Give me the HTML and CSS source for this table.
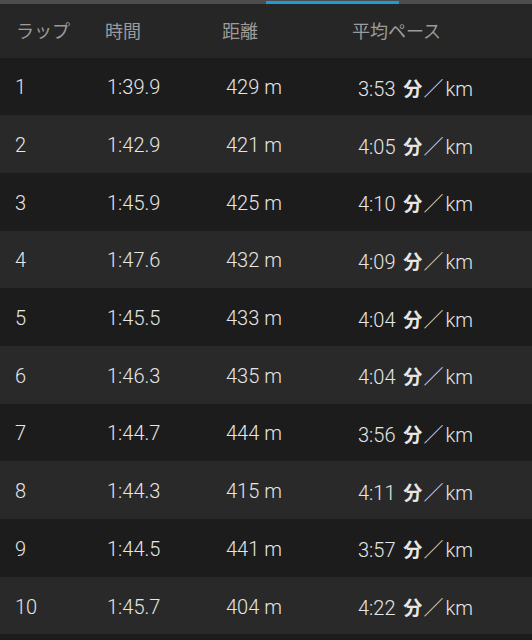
FILE: index.html
```html
<!DOCTYPE html>
<html lang="ja">
<head>
<meta charset="utf-8">
<link rel="stylesheet" href="styles.css">
</head>
<body>
<div class="tabbar"><div class="tab-indicator"></div></div>
<div class="header">
  <span>ラップ</span><span>時間</span><span>距離</span><span>平均ペース</span>
</div>
<div class="rows">
  <div class="row"><span>1</span><span>1:39.9</span><span>429 m</span><span>3:53 <b>分</b><i>／</i>km</span></div>
  <div class="row"><span>2</span><span>1:42.9</span><span>421 m</span><span>4:05 <b>分</b><i>／</i>km</span></div>
  <div class="row"><span>3</span><span>1:45.9</span><span>425 m</span><span>4:10 <b>分</b><i>／</i>km</span></div>
  <div class="row"><span>4</span><span>1:47.6</span><span>432 m</span><span>4:09 <b>分</b><i>／</i>km</span></div>
  <div class="row"><span>5</span><span>1:45.5</span><span>433 m</span><span>4:04 <b>分</b><i>／</i>km</span></div>
  <div class="row"><span>6</span><span>1:46.3</span><span>435 m</span><span>4:04 <b>分</b><i>／</i>km</span></div>
  <div class="row"><span>7</span><span>1:44.7</span><span>444 m</span><span>3:56 <b>分</b><i>／</i>km</span></div>
  <div class="row"><span>8</span><span>1:44.3</span><span>415 m</span><span>4:11 <b>分</b><i>／</i>km</span></div>
  <div class="row"><span>9</span><span>1:44.5</span><span>441 m</span><span>3:57 <b>分</b><i>／</i>km</span></div>
  <div class="row"><span>10</span><span>1:45.7</span><span>404 m</span><span>4:22 <b>分</b><i>／</i>km</span></div>
</div>
</body>
</html>
```
FILE: styles.css
```css
html, body {
  margin: 0;
  padding: 0;
  background: #1c1c1c;
  width: 532px;
  height: 640px;
  overflow: hidden;
}
body {
  font-family: Roboto, "Noto Sans CJK JP", sans-serif;
}
.tabbar {
  height: 4px;
  background: #4d4d4d;
  display: flex;
  align-items: flex-end;
  padding-left: 266px;
}
.tab-indicator {
  width: 133px;
  height: 3px;
  background: #1d9bd6;
}
.header {
  height: 53.5px;
  background: #262626;
  display: grid;
  grid-template-columns: 89px 117px 130px 1fr;
  padding-left: 16px;
  align-items: center;
  font-family: "Noto Sans CJK JP", sans-serif;
  font-size: 18px;
  color: #9b9b9b;
  box-sizing: border-box;
  padding-bottom: 1px;
}
.row {
  height: 57.7px;
  box-sizing: border-box;
  padding-top: 2px;
  display: grid;
  grid-template-columns: 92px 119px 132px 1fr;
  padding-left: 15px;
  align-items: center;
  font-size: 20px;
  font-weight: 300;
  color: #e6e6e6;
  background: #1c1c1c;
}
.row:nth-child(even) {
  background: #292929;
}
.row b {
  font-family: "Noto Sans CJK JP", sans-serif;
  font-weight: 700;
  font-size: 19px;
  margin-left: 3px;
}
.row i {
  font-style: normal;
  font-family: "Noto Sans CJK JP", sans-serif;
  font-weight: 300;
  font-size: 20px;
  margin: 0 2px 0 1px;
}
```
